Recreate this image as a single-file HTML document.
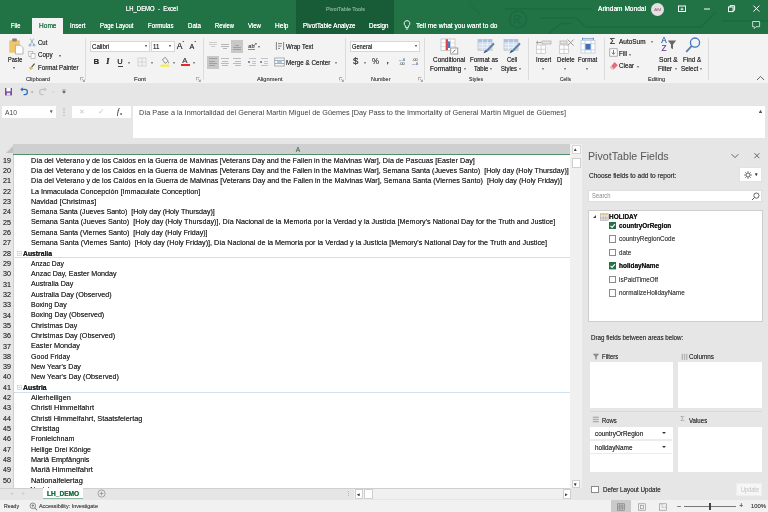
<!DOCTYPE html><html><head><meta charset="utf-8"><title>LH_DEMO - Excel</title><style>
html,body{margin:0;padding:0}body{width:768px;height:512px;position:relative;overflow:hidden;background:#e6e6e6;font-family:"Liberation Sans",sans-serif}
#a{position:absolute;left:0;top:0;width:768px;height:512px;overflow:hidden;will-change:transform;filter:blur(.35px)}
#a>div,#a>svg{position:absolute;display:block}
#a>span{position:absolute;white-space:pre;transform-origin:0 50%;display:block;text-shadow:0 0 .15px}
</style></head><body><div id="a">
<div style="left:0.00px;top:0.00px;width:768.00px;height:33.60px;background:#217346;"></div>
<div style="left:296.30px;top:0.00px;width:98.00px;height:33.60px;background:#185c37;"></div>
<svg style="left:380px;top:0;width:388px;height:34px" viewBox="380 0 388 34" fill="none" stroke="#1d6a40" stroke-width="1.5">
<path d="M505 8.7H592"/><path d="M541 17.8H576L586 27H701L716 12"/><path d="M548 34L561 23.5H572"/>
<circle cx="518" cy="19.3" r="8.4"/><path d="M514.5 23.5v-8h4l2 2-2 2h-3l5 4.5" stroke-width="1.3"/>
<path d="M722 21H768"/><path d="M470 0v5l10 9" stroke-opacity=".6"/>
</svg>
<span style='left:126.00px;top:5.31px;font-size:6.6px;line-height:8.58px;color:#fff;transform:scaleX(0.8986);'>LH_DEMO  -  Excel</span>
<span style='left:326.00px;top:5.59px;font-size:5.4px;line-height:7.02px;color:#7fae93;transform:scaleX(1.0036);'>PivotTable Tools</span>
<span style='left:598.00px;top:5.31px;font-size:6.6px;line-height:8.58px;color:#fff;transform:scaleX(0.9997);'>Arindam Mondal</span>
<div style="left:650.7px;top:2.6px;width:13.2px;height:13.2px;border-radius:7px;background:#e6e0e2"></div>
<span style='left:653.60px;top:6.54px;font-size:4.4px;line-height:5.72px;color:#a08a92;transform:scaleX(1.1223);'>AM</span>
<svg style="left:670px;top:0;width:98px;height:34px" viewBox="670 0 98 34" fill="none" stroke="#fff" stroke-width="1">
<rect x="678.5" y="6" width="7" height="5.5"/><path d="M680.5 9.2h3M682 7.7v2.6" stroke-width=".9"/>
<path d="M704 9h6"/>
<rect x="728.5" y="7" width="4.6" height="4.6"/><path d="M730 7v-1.3h4.6v4.6h-1.4"/>
<path d="M753.4 5.6l6 6M759.4 5.6l-6 6"/>
<path d="M752.6 21.5h7v5.2h-3.6l-1.7 1.8v-1.8h-1.7z" stroke="#d6e6dc" stroke-width=".9"/>
</svg>
<div style="left:32.00px;top:18.00px;width:31.30px;height:16.00px;background:#f3f3f3;"></div>
<span style='left:11.00px;top:22.01px;font-size:6.6px;line-height:8.58px;color:#fff;transform:scaleX(0.8941);'>File</span>
<span style='left:70.00px;top:22.01px;font-size:6.6px;line-height:8.58px;color:#fff;transform:scaleX(0.9394);'>Insert</span>
<span style='left:100.00px;top:22.01px;font-size:6.6px;line-height:8.58px;color:#fff;transform:scaleX(0.9046);'>Page Layout</span>
<span style='left:148.00px;top:22.01px;font-size:6.6px;line-height:8.58px;color:#fff;transform:scaleX(0.9278);'>Formulas</span>
<span style='left:187.50px;top:22.01px;font-size:6.6px;line-height:8.58px;color:#fff;transform:scaleX(0.9327);'>Data</span>
<span style='left:214.50px;top:22.01px;font-size:6.6px;line-height:8.58px;color:#fff;transform:scaleX(0.8786);'>Review</span>
<span style='left:247.50px;top:22.01px;font-size:6.6px;line-height:8.58px;color:#fff;transform:scaleX(0.9163);'>View</span>
<span style='left:274.50px;top:22.01px;font-size:6.6px;line-height:8.58px;color:#fff;transform:scaleX(0.9954);'>Help</span>
<span style='left:302.50px;top:22.01px;font-size:6.6px;line-height:8.58px;color:#fff;transform:scaleX(0.9483);'>PivotTable Analyze</span>
<span style='left:368.50px;top:22.01px;font-size:6.6px;line-height:8.58px;color:#fff;transform:scaleX(0.9498);'>Design</span>
<span style='left:39.00px;top:22.01px;font-size:6.6px;line-height:8.58px;color:#217346;transform:scaleX(0.9947);'>Home</span>
<span style='left:416.00px;top:22.01px;font-size:6.6px;line-height:8.58px;color:#fff;transform:scaleX(1.0015);'>Tell me what you want to do</span>
<svg style="left:402px;top:19px;width:10px;height:13px" viewBox="0 0 10 13" fill="none" stroke="#fff" stroke-width=".9">
<path d="M5 1.6a2.9 2.9 0 0 1 1.7 5.2l-.3 1.6h-2.8l-.3-1.6a2.9 2.9 0 0 1 1.7-5.2z"/><path d="M3.8 10h2.4" /></svg>
<div style="left:0.00px;top:33.60px;width:768.00px;height:49.70px;background:#f3f3f3;"></div>
<div style="left:0.00px;top:82.70px;width:768.00px;height:0.80px;background:#d8d8d8;"></div>
<div style="left:85.40px;top:37.50px;width:0.80px;height:42.50px;background:#dcdcdc;"></div>
<div style="left:202.60px;top:37.50px;width:0.80px;height:42.50px;background:#dcdcdc;"></div>
<div style="left:344.90px;top:37.50px;width:0.80px;height:42.50px;background:#dcdcdc;"></div>
<div style="left:424.30px;top:37.50px;width:0.80px;height:42.50px;background:#dcdcdc;"></div>
<div style="left:527.60px;top:37.50px;width:0.80px;height:42.50px;background:#dcdcdc;"></div>
<div style="left:603.60px;top:37.50px;width:0.80px;height:42.50px;background:#dcdcdc;"></div>
<div style="left:708.30px;top:37.50px;width:0.80px;height:42.50px;background:#dcdcdc;"></div>
<svg style="left:8px;top:36.8px;width:17px;height:18px" viewBox="0 0 17 18">
<rect x="1.2" y="3.2" width="10.6" height="12.6" rx=".8" fill="#f0c66c"/><rect x="4.2" y="1.6" width="4.6" height="2.8" rx=".6" fill="#8a8378"/>
<path d="M7.4 8.2h5.2l2.4 2.4v6.4h-7.6z" fill="#fff" stroke="#9a9a9a" stroke-width=".7"/></svg>
<span style='left:8.00px;top:56.31px;font-size:6.6px;line-height:8.58px;color:#3c3c3c;transform:scaleX(0.8474);'>Paste</span>
<span style='left:13.30px;top:64.66px;font-size:3.9px;line-height:5.07px;color:#777;'>▾</span>
<svg style="left:28px;top:37px;width:10px;height:36px" viewBox="0 0 10 36" fill="none">
<path d="M2.2 1.5l3.6 6M5.8 1.5l-3.6 6" stroke="#8797ad" stroke-width=".7"/><circle cx="2" cy="8.2" r="1" stroke="#6e8fc0" stroke-width=".7"/><circle cx="6" cy="8.2" r="1" stroke="#6e8fc0" stroke-width=".7"/>
<rect x=".8" y="14.6" width="4" height="5" stroke="#a8a8a8" stroke-width=".7" fill="#fff"/><rect x="3" y="16.6" width="4" height="5" stroke="#a8a8a8" stroke-width=".7" fill="#fff"/>
<path d="M6.6 26.6l-3 3.6" stroke="#555" stroke-width="1.3"/><path d="M1 30.2l2.6-.4 1.4 1.8-2.8 1.6z" fill="#e8b84a"/></svg>
<span style='left:38.00px;top:38.61px;font-size:6.6px;line-height:8.58px;color:#3c3c3c;transform:scaleX(0.9059);'>Cut</span>
<span style='left:38.00px;top:51.01px;font-size:6.6px;line-height:8.58px;color:#3c3c3c;transform:scaleX(0.9477);'>Copy</span>
<span style='left:58.50px;top:52.56px;font-size:3.9px;line-height:5.07px;color:#777;'>▾</span>
<span style='left:38.00px;top:63.81px;font-size:6.6px;line-height:8.58px;color:#3c3c3c;transform:scaleX(0.9287);'>Format Painter</span>
<span style='left:26.30px;top:75.89px;font-size:5.7px;line-height:7.41px;color:#555;transform:scaleX(0.9852);'>Clipboard</span>
<svg style="left:79.5px;top:77.0px;width:5px;height:5px" viewBox="0 0 5 5" fill="none" stroke="#888" stroke-width=".7"><path d="M.4 3.4V.4h3"/><path d="M2 2l2.4 2.4M4.4 2.6v1.8H2.6"/></svg>
<svg style="left:196.0px;top:77.0px;width:5px;height:5px" viewBox="0 0 5 5" fill="none" stroke="#888" stroke-width=".7"><path d="M.4 3.4V.4h3"/><path d="M2 2l2.4 2.4M4.4 2.6v1.8H2.6"/></svg>
<svg style="left:339.0px;top:77.0px;width:5px;height:5px" viewBox="0 0 5 5" fill="none" stroke="#888" stroke-width=".7"><path d="M.4 3.4V.4h3"/><path d="M2 2l2.4 2.4M4.4 2.6v1.8H2.6"/></svg>
<svg style="left:418.0px;top:77.0px;width:5px;height:5px" viewBox="0 0 5 5" fill="none" stroke="#888" stroke-width=".7"><path d="M.4 3.4V.4h3"/><path d="M2 2l2.4 2.4M4.4 2.6v1.8H2.6"/></svg>
<div style="left:90.30px;top:40.70px;width:60.20px;height:11.50px;background:#fff;border:0.7px solid #d6d6d6;box-sizing:border-box"></div>
<span style='left:92.30px;top:42.86px;font-size:6.6px;line-height:8.58px;color:#3c3c3c;transform:scaleX(0.9204);'>Calibri</span>
<span style='left:144.90px;top:44.18px;font-size:3.8px;line-height:4.94px;color:#666;'>▾</span>
<div style="left:151.00px;top:40.70px;width:23.50px;height:11.50px;background:#fff;border:0.7px solid #d6d6d6;box-sizing:border-box"></div>
<span style='left:153.00px;top:42.86px;font-size:6.6px;line-height:8.58px;color:#3c3c3c;transform:scaleX(0.9476);'>11</span>
<span style='left:168.90px;top:44.18px;font-size:3.8px;line-height:4.94px;color:#666;'>▾</span>
<span style='left:176.80px;top:40.61px;font-size:8.6px;line-height:11.18px;color:#444;'>A</span>
<span style='left:182.60px;top:39.65px;font-size:5px;line-height:6.5px;color:#444;'>ˆ</span>
<span style='left:189.50px;top:42.32px;font-size:7.2px;line-height:9.36px;color:#444;'>A</span>
<span style='left:194.60px;top:39.85px;font-size:5px;line-height:6.5px;color:#444;'>ˇ</span>
<span style='left:93.50px;top:57.13px;font-size:7.8px;line-height:10.14px;color:#333;font-weight:700;'>B</span>
<span style='left:106.30px;top:57.00px;font-size:8px;line-height:10.4px;color:#333;font-weight:700;font-style:italic;font-family:"Liberation Serif",serif;'>I</span>
<span style='left:117.30px;top:57.06px;font-size:7.6px;line-height:9.88px;color:#333;'>U</span>
<div style="left:117.50px;top:66.30px;width:5.50px;height:0.70px;background:#444;"></div>
<span style='left:128.30px;top:60.36px;font-size:3.9px;line-height:5.07px;color:#888;'>▾</span>
<span style='left:150.50px;top:60.36px;font-size:3.9px;line-height:5.07px;color:#888;'>▾</span>
<span style='left:173.00px;top:60.36px;font-size:3.9px;line-height:5.07px;color:#888;'>▾</span>
<span style='left:193.00px;top:60.36px;font-size:3.9px;line-height:5.07px;color:#888;'>▾</span>
<svg style="left:137px;top:57px;width:10px;height:10px" viewBox="0 0 10 10" fill="none" stroke="#c8c8c8" stroke-width=".7"><rect x="1" y="1" width="8" height="8"/><path d="M5 1v8M1 5h8"/></svg>
<svg style="left:159px;top:56px;width:12px;height:12px" viewBox="0 0 12 12" fill="none"><path d="M3.4 3.6l3-2.2 2.8 3.8-3 2.2z" stroke="#777" stroke-width=".8" fill="#f6f6f6"/><path d="M9.6 5.4q1 1.6 0 2-.9-.4 0-2z" fill="#777"/><rect x="1.6" y="8.6" width="8.6" height="2.2" fill="#f4ee42"/></svg>
<span style='left:182.20px;top:55.93px;font-size:7.8px;line-height:10.14px;color:#555;'>A</span>
<div style="left:180.50px;top:64.00px;width:9.00px;height:2.40px;background:#e8272a;"></div>
<span style='left:134.00px;top:75.89px;font-size:5.7px;line-height:7.41px;color:#555;transform:scaleX(1.0535);'>Font</span>
<div style="left:231.00px;top:40.00px;width:12.20px;height:12.50px;background:#c8c8c8;"></div>
<div style="left:207.00px;top:56.00px;width:12.20px;height:12.50px;background:#c8c8c8;"></div>
<div style="left:209.30px;top:42.00px;width:7.40px;height:0.80px;background:#cdcdcd;"></div>
<div style="left:209.30px;top:44.10px;width:7.40px;height:0.80px;background:#cdcdcd;"></div>
<div style="left:210.80px;top:46.20px;width:4.40px;height:0.80px;background:#cdcdcd;"></div>
<div style="left:221.30px;top:43.80px;width:7.40px;height:0.80px;background:#b4b4b4;"></div>
<div style="left:221.30px;top:45.90px;width:7.40px;height:0.80px;background:#b4b4b4;"></div>
<div style="left:222.80px;top:48.00px;width:4.40px;height:0.80px;background:#b4b4b4;"></div>
<div style="left:234.80px;top:45.20px;width:4.40px;height:0.80px;background:#a0a0a0;"></div>
<div style="left:233.30px;top:47.30px;width:7.40px;height:0.80px;background:#a0a0a0;"></div>
<div style="left:233.30px;top:49.40px;width:7.40px;height:0.80px;background:#a0a0a0;"></div>
<div style="left:209.30px;top:58.40px;width:7.40px;height:0.80px;background:#a0a0a0;"></div>
<div style="left:209.30px;top:60.50px;width:5.40px;height:0.80px;background:#a0a0a0;"></div>
<div style="left:209.30px;top:62.60px;width:7.40px;height:0.80px;background:#a0a0a0;"></div>
<div style="left:209.30px;top:64.70px;width:5.40px;height:0.80px;background:#a0a0a0;"></div>
<div style="left:221.30px;top:58.40px;width:7.40px;height:0.80px;background:#bababa;"></div>
<div style="left:222.30px;top:60.50px;width:5.40px;height:0.80px;background:#bababa;"></div>
<div style="left:221.30px;top:62.60px;width:7.40px;height:0.80px;background:#bababa;"></div>
<div style="left:222.30px;top:64.70px;width:5.40px;height:0.80px;background:#bababa;"></div>
<div style="left:233.30px;top:58.40px;width:7.40px;height:0.80px;background:#bababa;"></div>
<div style="left:235.30px;top:60.50px;width:5.40px;height:0.80px;background:#bababa;"></div>
<div style="left:233.30px;top:62.60px;width:7.40px;height:0.80px;background:#bababa;"></div>
<div style="left:235.30px;top:64.70px;width:5.40px;height:0.80px;background:#bababa;"></div>
<div style="left:249.00px;top:58.40px;width:7.40px;height:0.80px;background:#c4c4c4;"></div>
<div style="left:252.00px;top:60.50px;width:4.40px;height:0.80px;background:#c4c4c4;"></div>
<div style="left:252.00px;top:62.60px;width:4.40px;height:0.80px;background:#c4c4c4;"></div>
<div style="left:249.00px;top:64.70px;width:7.40px;height:0.80px;background:#c4c4c4;"></div>
<div style="left:261.00px;top:58.40px;width:7.40px;height:0.80px;background:#c4c4c4;"></div>
<div style="left:264.00px;top:60.50px;width:4.40px;height:0.80px;background:#c4c4c4;"></div>
<div style="left:264.00px;top:62.60px;width:4.40px;height:0.80px;background:#c4c4c4;"></div>
<div style="left:261.00px;top:64.70px;width:7.40px;height:0.80px;background:#c4c4c4;"></div>
<div style="left:247.8px;top:60.7px;width:2.3px;height:2.6px;border-radius:2px;background:#52739f"></div>
<div style="left:260px;top:60.7px;width:2.3px;height:2.6px;border-radius:2px;background:#52739f"></div>
<span style='left:248.30px;top:42.56px;font-size:5.6px;line-height:7.28px;color:#555;'>ab</span>
<div style="left:248.00px;top:49.00px;width:7.00px;height:0.70px;background:#888;"></div>
<span style='left:252.50px;top:40.85px;font-size:5px;line-height:6.5px;color:#777;'>↗</span>
<span style='left:258.00px;top:44.06px;font-size:3.9px;line-height:5.07px;color:#888;'>▾</span>
<svg style="left:275px;top:41px;width:10px;height:10px" viewBox="0 0 10 10" fill="none" stroke="#666" stroke-width=".8"><path d="M1.4 1v8M8.6 1v8M3 2.6h4M3 5h3.6M3 7.4h2"/></svg>
<svg style="left:274px;top:57px;width:11px;height:10px" viewBox="0 0 11 10" fill="none" stroke="#8a8a8a" stroke-width=".7"><rect x=".8" y="1" width="9.4" height="8" fill="#fff"/><path d="M.8 3.4h9.4M.8 6.6h9.4" stroke="#5b86c4"/><path d="M3 5h5" stroke="#555"/></svg>
<span style='left:286.00px;top:42.51px;font-size:6.6px;line-height:8.58px;color:#3c3c3c;transform:scaleX(0.9269);'>Wrap Text</span>
<span style='left:286.00px;top:58.71px;font-size:6.6px;line-height:8.58px;color:#3c3c3c;transform:scaleX(0.9517);'>Merge &amp; Center</span>
<span style='left:335.20px;top:60.36px;font-size:3.9px;line-height:5.07px;color:#888;'>▾</span>
<span style='left:257.00px;top:75.89px;font-size:5.7px;line-height:7.41px;color:#555;transform:scaleX(1.0080);'>Alignment</span>
<div style="left:350.30px;top:40.70px;width:70.20px;height:11.50px;background:#fff;border:0.7px solid #d6d6d6;box-sizing:border-box"></div>
<span style='left:352.30px;top:42.86px;font-size:6.6px;line-height:8.58px;color:#3c3c3c;transform:scaleX(0.8607);'>General</span>
<span style='left:414.90px;top:44.18px;font-size:3.8px;line-height:4.94px;color:#666;'>▾</span>
<span style='left:353.30px;top:56.48px;font-size:8.8px;line-height:11.44px;color:#444;transform:scaleX(1.1006);'>$</span>
<span style='left:363.50px;top:60.36px;font-size:3.9px;line-height:5.07px;color:#888;'>▾</span>
<span style='left:372.00px;top:56.87px;font-size:8.2px;line-height:10.66px;color:#555;transform:scaleX(0.9614);'>%</span>
<span style='left:386.60px;top:56.40px;font-size:8px;line-height:10.4px;color:#444;font-weight:700;'>,</span>
<span style='left:398.50px;top:58.46px;font-size:3.6px;line-height:4.68px;color:#4472a8;'>←.0</span>
<span style='left:399.50px;top:62.26px;font-size:3.6px;line-height:4.68px;color:#666;'>.00</span>
<span style='left:412.50px;top:58.46px;font-size:3.6px;line-height:4.68px;color:#666;'>.00</span>
<span style='left:411.50px;top:62.26px;font-size:3.6px;line-height:4.68px;color:#4472a8;'>→.0</span>
<span style='left:371.00px;top:75.89px;font-size:5.7px;line-height:7.41px;color:#555;transform:scaleX(0.9637);'>Number</span>
<svg style="left:440px;top:37.8px;width:19px;height:17px" viewBox="0 0 19 17" fill="none">
<rect x="1" y="1" width="14" height="11.6" fill="#fff" stroke="#b9b9b9" stroke-width=".7"/><path d="M1 4.8h14M1 8.6h14M5.6 1v11.6M10.4 1v11.6" stroke="#c9c9c9" stroke-width=".6"/>
<rect x="5.8" y="1.2" width="2.2" height="11" fill="#e0474c"/><rect x="8" y="3.4" width="2.2" height="6.6" fill="#4a7dc4"/>
<rect x="10.8" y="10" width="7" height="6" fill="#fff" stroke="#777" stroke-width=".7"/><path d="M12.6 14.6l3-3" stroke="#555" stroke-width=".9"/></svg>
<span style='left:433.00px;top:56.11px;font-size:6.6px;line-height:8.58px;color:#3c3c3c;transform:scaleX(0.9788);'>Conditional</span>
<span style='left:430.00px;top:64.81px;font-size:6.6px;line-height:8.58px;color:#3c3c3c;transform:scaleX(0.9932);'>Formatting</span>
<span style='left:463.50px;top:66.47px;font-size:3.9px;line-height:5.07px;color:#888;'>▾</span>
<svg style="left:476.5px;top:38px;width:19px;height:17px" viewBox="0 0 19 17" fill="none">
<rect x="1" y="1.6" width="14" height="10.6" fill="#d3dfee" stroke="#b9b9b9" stroke-width=".7"/><rect x="1" y="1.6" width="14" height="2.4" fill="#a9c1e2"/>
<path d="M1 6.6h14M1 9.4h14M5.6 1.6v10.6M10.4 1.6v10.6" stroke="#f4f7fb" stroke-width=".6"/>
<path d="M16.4 4.4l-7 7.4-3 3.4 4.2-1.8 7-7.2z" fill="#5d7fae"/><path d="M6.4 15.2l2-3.2 1.6 1.8z" fill="#39557f"/></svg>
<svg style="left:503px;top:38px;width:19px;height:17px" viewBox="0 0 19 17" fill="none">
<rect x="1" y="1.6" width="14" height="10.6" fill="#d3dfee" stroke="#b9b9b9" stroke-width=".7"/><rect x="1" y="1.6" width="14" height="2.4" fill="#a9c1e2"/>
<path d="M1 6.6h14M1 9.4h14M5.6 1.6v10.6M10.4 1.6v10.6" stroke="#f4f7fb" stroke-width=".6"/>
<path d="M16.4 4.4l-7 7.4-3 3.4 4.2-1.8 7-7.2z" fill="#5d7fae"/><path d="M6.4 15.2l2-3.2 1.6 1.8z" fill="#39557f"/></svg>
<span style='left:470.00px;top:56.11px;font-size:6.6px;line-height:8.58px;color:#3c3c3c;transform:scaleX(0.9432);'>Format as</span>
<span style='left:474.00px;top:64.81px;font-size:6.6px;line-height:8.58px;color:#3c3c3c;transform:scaleX(0.9070);'>Table</span>
<span style='left:490.30px;top:66.47px;font-size:3.9px;line-height:5.07px;color:#888;'>▾</span>
<span style='left:506.80px;top:56.11px;font-size:6.6px;line-height:8.58px;color:#3c3c3c;transform:scaleX(0.8979);'>Cell</span>
<span style='left:500.80px;top:64.81px;font-size:6.6px;line-height:8.58px;color:#3c3c3c;transform:scaleX(0.8793);'>Styles</span>
<span style='left:518.60px;top:66.47px;font-size:3.9px;line-height:5.07px;color:#888;'>▾</span>
<span style='left:469.00px;top:75.89px;font-size:5.7px;line-height:7.41px;color:#555;transform:scaleX(0.9032);'>Styles</span>
<svg style="left:535px;top:38px;width:17px;height:17px" viewBox="0 0 17 17" fill="none" stroke="#c0c0c0" stroke-width=".7">
<rect x="1.6" y="7" width="9" height="8.6" fill="#fff"/><path d="M1.6 11.3h9M6.1 7v8.6"/><rect x="7" y="3" width="9" height="3" fill="#e4e4e4" stroke="#aaa"/><path d="M6.4 4.5h-5M3 2.8L1.2 4.5 3 6.2" stroke="#999" stroke-width=".9"/></svg>
<svg style="left:558px;top:38px;width:17px;height:17px" viewBox="0 0 17 17" fill="none" stroke="#c0c0c0" stroke-width=".7">
<rect x="1.6" y="7" width="9" height="8.6" fill="#fff"/><path d="M1.6 11.3h9M6.1 7v8.6"/><rect x="2" y="3" width="7" height="3" fill="#e4e4e4" stroke="#aaa"/><path d="M9.6 1.6l6 6M15.6 1.6l-6 6" stroke="#999" stroke-width="1"/></svg>
<svg style="left:579px;top:37px;width:18px;height:18px" viewBox="0 0 18 18" fill="none" stroke="#b5c3d6" stroke-width=".7">
<rect x="2" y="3.6" width="14" height="12.4" fill="#fff"/><path d="M2 6.6h14M2 13h14M6 3.6v12.4M12 3.6v12.4"/><rect x="6.4" y="7" width="5.2" height="5.6" fill="#3f6fb6" stroke="none"/>
<path d="M3.6 1.8h10.8M3.6 .6v2.4M14.4 .6v2.4" stroke="#4a7dc4" stroke-width=".8"/></svg>
<span style='left:536.00px;top:56.11px;font-size:6.6px;line-height:8.58px;color:#3c3c3c;transform:scaleX(0.9273);'>Insert</span>
<span style='left:557.00px;top:56.11px;font-size:6.6px;line-height:8.58px;color:#3c3c3c;transform:scaleX(0.9233);'>Delete</span>
<span style='left:578.00px;top:56.11px;font-size:6.6px;line-height:8.58px;color:#3c3c3c;transform:scaleX(0.9239);'>Format</span>
<span style='left:541.50px;top:65.86px;font-size:3.9px;line-height:5.07px;color:#888;'>▾</span>
<span style='left:563.50px;top:65.86px;font-size:3.9px;line-height:5.07px;color:#888;'>▾</span>
<span style='left:585.50px;top:65.86px;font-size:3.9px;line-height:5.07px;color:#888;'>▾</span>
<span style='left:560.00px;top:75.89px;font-size:5.7px;line-height:7.41px;color:#555;transform:scaleX(0.8691);'>Cells</span>
<span style='left:609.70px;top:36.41px;font-size:8.6px;line-height:11.18px;color:#444;'>Σ</span>
<span style='left:619.00px;top:37.81px;font-size:6.6px;line-height:8.58px;color:#3c3c3c;transform:scaleX(0.9770);'>AutoSum</span>
<span style='left:650.50px;top:39.47px;font-size:3.9px;line-height:5.07px;color:#888;'>▾</span>
<svg style="left:609px;top:48.4px;width:9px;height:9px" viewBox="0 0 9 9" fill="none"><rect x=".8" y=".8" width="7.4" height="7.4" stroke="#8a8a8a" stroke-width=".7" fill="#fff"/><path d="M4.5 2v4.2M2.8 4.6l1.7 1.8 1.7-1.8" stroke="#3f6fb6" stroke-width=".9"/></svg>
<span style='left:619.00px;top:49.91px;font-size:6.6px;line-height:8.58px;color:#3c3c3c;transform:scaleX(0.9481);'>Fill</span>
<span style='left:629.00px;top:51.56px;font-size:3.9px;line-height:5.07px;color:#888;'>▾</span>
<svg style="left:608.5px;top:60.5px;width:10px;height:9px" viewBox="0 0 10 9"><path d="M5.6 1l3.2 3.2-4 4H2.6L1 6.6z" fill="#e56a7a"/><path d="M1 6.6l1.6 1.6h2.2L2.6 5z" fill="#f3c4ca"/></svg>
<span style='left:619.00px;top:62.11px;font-size:6.6px;line-height:8.58px;color:#3c3c3c;transform:scaleX(0.9514);'>Clear</span>
<span style='left:636.50px;top:63.77px;font-size:3.9px;line-height:5.07px;color:#888;'>▾</span>
<span style='left:661.20px;top:36.07px;font-size:8.2px;line-height:10.66px;color:#3f6fb6;'>A</span>
<span style='left:661.50px;top:43.67px;font-size:8.2px;line-height:10.66px;color:#7d4fa3;'>Z</span>
<svg style="left:667px;top:39px;width:10px;height:12px" viewBox="0 0 10 12"><path d="M.8 1.6h8.4l-3.2 4v4.6l-2 -1.2v-3.4z" fill="#666"/></svg>
<svg style="left:684px;top:36px;width:18px;height:18px" viewBox="0 0 18 18" fill="none"><circle cx="11" cy="6.6" r="4.6" stroke="#3f76c0" stroke-width="1.3"/><path d="M7.6 10.2l-5.4 5.6" stroke="#5a7da8" stroke-width="1.8"/></svg>
<span style='left:659.30px;top:55.91px;font-size:6.6px;line-height:8.58px;color:#3c3c3c;transform:scaleX(1.0203);'>Sort &amp;</span>
<span style='left:658.30px;top:64.61px;font-size:6.6px;line-height:8.58px;color:#3c3c3c;transform:scaleX(0.9689);'>Filter</span>
<span style='left:674.50px;top:66.27px;font-size:3.9px;line-height:5.07px;color:#888;'>▾</span>
<span style='left:683.00px;top:55.91px;font-size:6.6px;line-height:8.58px;color:#3c3c3c;transform:scaleX(0.9600);'>Find &amp;</span>
<span style='left:681.00px;top:64.61px;font-size:6.6px;line-height:8.58px;color:#3c3c3c;transform:scaleX(0.9439);'>Select</span>
<span style='left:699.80px;top:66.27px;font-size:3.9px;line-height:5.07px;color:#888;'>▾</span>
<span style='left:648.00px;top:75.89px;font-size:5.7px;line-height:7.41px;color:#555;transform:scaleX(0.9775);'>Editing</span>
<svg style="left:756px;top:75px;width:9px;height:6px" viewBox="0 0 9 6" fill="none" stroke="#555" stroke-width=".9"><path d="M1 5l3.5-3.6L8 5"/></svg>
<div style="left:0.00px;top:83.30px;width:768.00px;height:60.90px;background:#e6e6e6;"></div>
<svg style="left:3px;top:86px;width:70px;height:12px" viewBox="0 0 70 12" fill="none">
<rect x="2" y="2" width="7" height="7.4" fill="#7a4c9e"/><rect x="3.4" y="2" width="4.2" height="3.4" fill="#fff"/><rect x="3.8" y="6.8" width="3.4" height="2.6" fill="#e8dcef"/>
<path d="M18.6 3.4h3.2a2.6 2.6 0 0 1 0 5.2h-1.2" stroke="#2e6db8" stroke-width="1.2"/><path d="M19.8 1.2l-2.6 2.2 2.6 2.2z" fill="#2e6db8"/>
<path d="M42.4 3.4h-3.2a2.6 2.6 0 0 0 0 5.2h1.2" stroke="#c3c3c3" stroke-width="1.2"/><path d="M41.2 1.2l2.6 2.2-2.6 2.2z" fill="#c3c3c3"/>
<path d="M27.6 5.4h3l-1.5 1.7z" fill="#999"/><path d="M49 5.4h3l-1.5 1.7z" fill="#ccc"/>
<path d="M59.4 4h3.2M59.6 5.6h2.8l-1.4 1.7z" fill="#555" stroke="#555" stroke-width=".6"/></svg>
<div style="left:2.00px;top:106.30px;width:54.00px;height:11.90px;background:#fff;"></div>
<span style='left:5.00px;top:108.51px;font-size:6.6px;line-height:8.58px;color:#4a4a4a;text-shadow:none;transform:scaleX(1.0226);'>A10</span>
<span style='left:49.80px;top:109.47px;font-size:4.5px;line-height:5.85px;color:#666;'>▾</span>
<div style="left:62.60px;top:108.00px;width:0.70px;height:0.90px;background:#c6c6c6;"></div>
<div style="left:62.60px;top:110.20px;width:0.70px;height:0.90px;background:#c6c6c6;"></div>
<div style="left:62.60px;top:112.40px;width:0.70px;height:0.90px;background:#c6c6c6;"></div>
<div style="left:62.60px;top:114.60px;width:0.70px;height:0.90px;background:#c6c6c6;"></div>
<div style="left:64.20px;top:108.00px;width:0.70px;height:0.90px;background:#c6c6c6;"></div>
<div style="left:64.20px;top:110.20px;width:0.70px;height:0.90px;background:#c6c6c6;"></div>
<div style="left:64.20px;top:112.40px;width:0.70px;height:0.90px;background:#c6c6c6;"></div>
<div style="left:64.20px;top:114.60px;width:0.70px;height:0.90px;background:#c6c6c6;"></div>
<div style="left:72.30px;top:106.30px;width:58.50px;height:11.90px;background:#fff;"></div>
<span style='left:78.60px;top:107.78px;font-size:6.8px;line-height:8.84px;color:#c8c8c8;text-shadow:none;'>✕</span>
<span style='left:98.40px;top:107.26px;font-size:7.6px;line-height:9.88px;color:#c8c8c8;text-shadow:none;'>✓</span>
<span style='left:117.00px;top:107.46px;font-size:7.6px;line-height:9.88px;color:#555;font-style:italic;font-family:"Liberation Serif",serif;'>f</span>
<span style='left:120.00px;top:110.55px;font-size:5px;line-height:6.5px;color:#555;font-style:italic;font-family:"Liberation Serif",serif;'>x</span>
<div style="left:133.20px;top:106.30px;width:631.80px;height:31.40px;background:#fff;"></div>
<span style='left:138.50px;top:108.61px;font-size:6.9px;line-height:8.97px;color:#404040;text-shadow:none;transform:scaleX(1.0538);'>Día Pase a la Inmortalidad del General Martín Miguel de Güemes [Day Pass to the Immortality of General Martín Miguel de Güemes]</span>
<span style='left:758.60px;top:108.30px;font-size:6px;line-height:7.8px;color:#555;'>▴</span>
<div style="left:0.00px;top:144.20px;width:768.00px;height:355.80px;background:#e6e6e6;"></div>
<div style="left:13.40px;top:144.20px;width:556.80px;height:9.80px;background:#cfcfcf;"></div>
<div style="left:13.40px;top:153.60px;width:556.80px;height:0.90px;background:#4f8f6c;"></div>
<div style="left:5.6px;top:145.6px;width:0;height:0;border-left:7.2px solid transparent;border-bottom:7.2px solid #c2c2c2"></div>
<span style='left:295.80px;top:146.11px;font-size:6.6px;line-height:8.58px;color:#56826b;'>A</span>
<div style="left:13.60px;top:154.50px;width:556.60px;height:333.50px;background:#fff;"></div>
<div style="left:13.00px;top:154.50px;width:0.60px;height:333.50px;background:#d0d0d0;"></div>
<span style='left:3.30px;top:156.74px;font-size:6.8px;line-height:8.84px;color:#444;transform:scaleX(1.0446);'>19</span>
<span style='left:30.70px;top:156.57px;font-size:6.9px;line-height:8.97px;color:#383838;transform:scaleX(1.0396);'>Día del Veterano y de los Caídos en la Guerra de Malvinas [Veterans Day and the Fallen in the Malvinas War], Día de Pascuas [Easter Day]</span>
<span style='left:3.30px;top:167.06px;font-size:6.8px;line-height:8.84px;color:#444;transform:scaleX(1.0446);'>20</span>
<span style='left:30.70px;top:166.89px;font-size:6.9px;line-height:8.97px;color:#383838;transform:scaleX(1.0393);'>Día del Veterano y de los Caídos en la Guerra de Malvinas [Veterans Day and the Fallen in the Malvinas War], Semana Santa (Jueves Santo)  [Holy day (Holy Thursday)]</span>
<span style='left:3.30px;top:177.38px;font-size:6.8px;line-height:8.84px;color:#444;transform:scaleX(1.0446);'>21</span>
<span style='left:30.70px;top:177.21px;font-size:6.9px;line-height:8.97px;color:#383838;transform:scaleX(1.0424);'>Día del Veterano y de los Caídos en la Guerra de Malvinas [Veterans Day and the Fallen in the Malvinas War], Semana Santa (Viernes Santo)  [Holy day (Holy Friday)]</span>
<span style='left:3.30px;top:187.70px;font-size:6.8px;line-height:8.84px;color:#444;transform:scaleX(1.0446);'>22</span>
<span style='left:30.70px;top:187.53px;font-size:6.9px;line-height:8.97px;color:#383838;transform:scaleX(1.0467);'>La Inmaculada Concepción [Immaculate Conception]</span>
<span style='left:3.30px;top:198.02px;font-size:6.8px;line-height:8.84px;color:#444;transform:scaleX(1.0446);'>23</span>
<span style='left:30.70px;top:197.85px;font-size:6.9px;line-height:8.97px;color:#383838;transform:scaleX(1.0524);'>Navidad [Christmas]</span>
<span style='left:3.30px;top:208.34px;font-size:6.8px;line-height:8.84px;color:#444;transform:scaleX(1.0446);'>24</span>
<span style='left:30.70px;top:208.17px;font-size:6.9px;line-height:8.97px;color:#383838;transform:scaleX(1.0261);'>Semana Santa (Jueves Santo)  [Holy day (Holy Thursday)]</span>
<span style='left:3.30px;top:218.66px;font-size:6.8px;line-height:8.84px;color:#444;transform:scaleX(1.0446);'>25</span>
<span style='left:30.70px;top:218.49px;font-size:6.9px;line-height:8.97px;color:#383838;transform:scaleX(1.0465);'>Semana Santa (Jueves Santo)  [Holy day (Holy Thursday)], Día Nacional de la Memoria por la Verdad y la Justicia [Memory's National Day for the Truth and Justice]</span>
<span style='left:3.30px;top:228.98px;font-size:6.8px;line-height:8.84px;color:#444;transform:scaleX(1.0446);'>26</span>
<span style='left:30.70px;top:228.81px;font-size:6.9px;line-height:8.97px;color:#383838;transform:scaleX(1.0323);'>Semana Santa (Viernes Santo)  [Holy day (Holy Friday)]</span>
<span style='left:3.30px;top:239.30px;font-size:6.8px;line-height:8.84px;color:#444;transform:scaleX(1.0446);'>27</span>
<span style='left:30.70px;top:239.13px;font-size:6.9px;line-height:8.97px;color:#383838;transform:scaleX(1.0468);'>Semana Santa (Viernes Santo)  [Holy day (Holy Friday)], Día Nacional de la Memoria por la Verdad y la Justicia [Memory's National Day for the Truth and Justice]</span>
<span style='left:3.30px;top:249.62px;font-size:6.8px;line-height:8.84px;color:#444;transform:scaleX(1.0446);'>28</span>
<span style='left:22.50px;top:249.52px;font-size:6.8px;line-height:8.84px;color:#222;font-weight:700;transform:scaleX(0.9933);'>Australia</span>
<svg style="left:16.6px;top:250.94px;width:5px;height:5px" viewBox="0 0 5 5" fill="none" stroke="#c6c6c6" stroke-width=".6"><rect x=".6" y=".6" width="3.8" height="3.8" fill="#fff"/><path d="M1.4 2.5h2.2" stroke="#aaa"/></svg>
<div style="left:13.60px;top:257.45px;width:556.60px;height:0.80px;background:#d0e0f1;"></div>
<span style='left:3.30px;top:259.94px;font-size:6.8px;line-height:8.84px;color:#444;transform:scaleX(1.0446);'>29</span>
<span style='left:30.70px;top:259.78px;font-size:6.9px;line-height:8.97px;color:#383838;transform:scaleX(0.9902);'>Anzac Day</span>
<span style='left:3.30px;top:270.26px;font-size:6.8px;line-height:8.84px;color:#444;transform:scaleX(1.0446);'>30</span>
<span style='left:30.70px;top:270.10px;font-size:6.9px;line-height:8.97px;color:#383838;transform:scaleX(1.0303);'>Anzac Day, Easter Monday</span>
<span style='left:3.30px;top:280.58px;font-size:6.8px;line-height:8.84px;color:#444;transform:scaleX(1.0446);'>31</span>
<span style='left:30.70px;top:280.42px;font-size:6.9px;line-height:8.97px;color:#383838;transform:scaleX(1.0321);'>Australia Day</span>
<span style='left:3.30px;top:290.90px;font-size:6.8px;line-height:8.84px;color:#444;transform:scaleX(1.0446);'>32</span>
<span style='left:30.70px;top:290.74px;font-size:6.9px;line-height:8.97px;color:#383838;transform:scaleX(1.0432);'>Australia Day (Observed)</span>
<span style='left:3.30px;top:301.22px;font-size:6.8px;line-height:8.84px;color:#444;transform:scaleX(1.0446);'>33</span>
<span style='left:30.70px;top:301.06px;font-size:6.9px;line-height:8.97px;color:#383838;transform:scaleX(1.0128);'>Boxing Day</span>
<span style='left:3.30px;top:311.54px;font-size:6.8px;line-height:8.84px;color:#444;transform:scaleX(1.0446);'>34</span>
<span style='left:30.70px;top:311.38px;font-size:6.9px;line-height:8.97px;color:#383838;transform:scaleX(1.0220);'>Boxing Day (Observed)</span>
<span style='left:3.30px;top:321.86px;font-size:6.8px;line-height:8.84px;color:#444;transform:scaleX(1.0446);'>35</span>
<span style='left:30.70px;top:321.70px;font-size:6.9px;line-height:8.97px;color:#383838;transform:scaleX(1.0224);'>Christmas Day</span>
<span style='left:3.30px;top:332.18px;font-size:6.8px;line-height:8.84px;color:#444;transform:scaleX(1.0446);'>36</span>
<span style='left:30.70px;top:332.01px;font-size:6.9px;line-height:8.97px;color:#383838;transform:scaleX(1.0299);'>Christmas Day (Observed)</span>
<span style='left:3.30px;top:342.50px;font-size:6.8px;line-height:8.84px;color:#444;transform:scaleX(1.0446);'>37</span>
<span style='left:30.70px;top:342.34px;font-size:6.9px;line-height:8.97px;color:#383838;transform:scaleX(1.0530);'>Easter Monday</span>
<span style='left:3.30px;top:352.82px;font-size:6.8px;line-height:8.84px;color:#444;transform:scaleX(1.0446);'>38</span>
<span style='left:30.70px;top:352.66px;font-size:6.9px;line-height:8.97px;color:#383838;transform:scaleX(1.0284);'>Good Friday</span>
<span style='left:3.30px;top:363.14px;font-size:6.8px;line-height:8.84px;color:#444;transform:scaleX(1.0446);'>39</span>
<span style='left:30.70px;top:362.98px;font-size:6.9px;line-height:8.97px;color:#383838;transform:scaleX(1.0302);'>New Year's Day</span>
<span style='left:3.30px;top:373.46px;font-size:6.8px;line-height:8.84px;color:#444;transform:scaleX(1.0446);'>40</span>
<span style='left:30.70px;top:373.30px;font-size:6.9px;line-height:8.97px;color:#383838;transform:scaleX(1.0352);'>New Year's Day (Observed)</span>
<span style='left:3.30px;top:383.78px;font-size:6.8px;line-height:8.84px;color:#444;transform:scaleX(1.0446);'>41</span>
<span style='left:22.50px;top:383.68px;font-size:6.8px;line-height:8.84px;color:#222;font-weight:700;transform:scaleX(1.0076);'>Austria</span>
<svg style="left:16.6px;top:385.10px;width:5px;height:5px" viewBox="0 0 5 5" fill="none" stroke="#c6c6c6" stroke-width=".6"><rect x=".6" y=".6" width="3.8" height="3.8" fill="#fff"/><path d="M1.4 2.5h2.2" stroke="#aaa"/></svg>
<div style="left:13.60px;top:391.61px;width:556.60px;height:0.80px;background:#d0e0f1;"></div>
<span style='left:3.30px;top:394.10px;font-size:6.8px;line-height:8.84px;color:#444;transform:scaleX(1.0446);'>42</span>
<span style='left:30.70px;top:393.94px;font-size:6.9px;line-height:8.97px;color:#383838;transform:scaleX(1.0600);'>Allerheiligen</span>
<span style='left:3.30px;top:404.42px;font-size:6.8px;line-height:8.84px;color:#444;transform:scaleX(1.0446);'>43</span>
<span style='left:30.70px;top:404.25px;font-size:6.9px;line-height:8.97px;color:#383838;transform:scaleX(1.0755);'>Christi Himmelfahrt</span>
<span style='left:3.30px;top:414.74px;font-size:6.8px;line-height:8.84px;color:#444;transform:scaleX(1.0446);'>44</span>
<span style='left:30.70px;top:414.58px;font-size:6.9px;line-height:8.97px;color:#383838;transform:scaleX(1.0616);'>Christi Himmelfahrt, Staatsfeiertag</span>
<span style='left:3.30px;top:425.06px;font-size:6.8px;line-height:8.84px;color:#444;transform:scaleX(1.0446);'>45</span>
<span style='left:30.70px;top:424.89px;font-size:6.9px;line-height:8.97px;color:#383838;transform:scaleX(1.0334);'>Christtag</span>
<span style='left:3.30px;top:435.38px;font-size:6.8px;line-height:8.84px;color:#444;transform:scaleX(1.0446);'>46</span>
<span style='left:30.70px;top:435.22px;font-size:6.9px;line-height:8.97px;color:#383838;transform:scaleX(1.0419);'>Fronleichnam</span>
<span style='left:3.30px;top:445.70px;font-size:6.8px;line-height:8.84px;color:#444;transform:scaleX(1.0446);'>47</span>
<span style='left:30.70px;top:445.54px;font-size:6.9px;line-height:8.97px;color:#383838;transform:scaleX(1.0172);'>Heilige Drei Könige</span>
<span style='left:3.30px;top:456.02px;font-size:6.8px;line-height:8.84px;color:#444;transform:scaleX(1.0446);'>48</span>
<span style='left:30.70px;top:455.86px;font-size:6.9px;line-height:8.97px;color:#383838;transform:scaleX(1.0532);'>Mariä Empfängnis</span>
<span style='left:3.30px;top:466.34px;font-size:6.8px;line-height:8.84px;color:#444;transform:scaleX(1.0446);'>49</span>
<span style='left:30.70px;top:466.18px;font-size:6.9px;line-height:8.97px;color:#383838;transform:scaleX(1.0995);'>Mariä Himmelfahrt</span>
<span style='left:3.30px;top:476.66px;font-size:6.8px;line-height:8.84px;color:#444;transform:scaleX(1.0446);'>50</span>
<span style='left:30.70px;top:476.50px;font-size:6.9px;line-height:8.97px;color:#383838;transform:scaleX(1.0732);'>Nationalfeiertag</span>
<span style='left:3.20px;top:486.50px;font-size:6.7px;line-height:8.71px;color:#555;transform:scaleX(1.0868);'>51</span>
<span style='left:30.20px;top:486.43px;font-size:6.8px;line-height:8.84px;color:#333;'>Neujahr</span>
<div style="left:570.20px;top:144.20px;width:11.40px;height:343.80px;background:#f0f0f0;"></div>
<div style="left:571.50px;top:144.90px;width:9.10px;height:9.30px;background:#fff;border:0.6px solid #d6d6d6;box-sizing:border-box"></div>
<span style='left:574.00px;top:146.35px;font-size:5px;line-height:6.5px;color:#444;'>▴</span>
<div style="left:571.50px;top:158.40px;width:9.10px;height:9.40px;background:#fff;border:0.6px solid #cfcfcf;box-sizing:border-box"></div>
<div style="left:571.70px;top:479.60px;width:8.70px;height:8.00px;background:#fff;border:0.6px solid #cfcfcf;box-sizing:border-box"></div>
<span style='left:574.00px;top:480.65px;font-size:5px;line-height:6.5px;color:#444;'>▾</span>
<div style="left:0.00px;top:488.00px;width:581.60px;height:12.00px;background:#e6e6e6;"></div>
<div style="left:0.00px;top:488.00px;width:570.20px;height:0.60px;background:#cfcfcf;"></div>
<span style='left:9.50px;top:490.23px;font-size:5.5px;line-height:7.15px;color:#d2d2d2;'>◂</span>
<span style='left:21.50px;top:490.23px;font-size:5.5px;line-height:7.15px;color:#d2d2d2;'>▸</span>
<div style="left:42.60px;top:488.40px;width:40.70px;height:10.20px;background:#fff;"></div>
<div style="left:42.60px;top:498.00px;width:40.70px;height:0.80px;background:#8db8a0;"></div>
<span style='left:46.80px;top:489.51px;font-size:6.6px;line-height:8.58px;color:#217346;font-weight:700;transform:scaleX(0.9984);'>LH_DEMO</span>
<svg style="left:97px;top:489.3px;width:9px;height:9px" viewBox="0 0 9 9" fill="none" stroke="#8a8a8a" stroke-width=".7"><circle cx="4.5" cy="4.5" r="3.6"/><path d="M4.5 2.6v3.8M2.6 4.5h3.8"/></svg>
<div style="left:347.60px;top:490.60px;width:0.80px;height:1.00px;background:#b5b5b5;"></div>
<div style="left:347.60px;top:493.00px;width:0.80px;height:1.00px;background:#b5b5b5;"></div>
<div style="left:347.60px;top:495.40px;width:0.80px;height:1.00px;background:#b5b5b5;"></div>
<div style="left:354.30px;top:489.20px;width:217.10px;height:9.60px;background:#f0f0f0;"></div>
<div style="left:354.50px;top:489.20px;width:8.90px;height:9.60px;background:#fff;border:0.6px solid #cfcfcf;box-sizing:border-box"></div>
<span style='left:356.80px;top:490.95px;font-size:5px;line-height:6.5px;color:#444;'>◂</span>
<div style="left:363.80px;top:489.20px;width:9.10px;height:9.60px;background:#fff;border:0.6px solid #cfcfcf;box-sizing:border-box"></div>
<div style="left:562.60px;top:489.20px;width:8.70px;height:9.60px;background:#fff;border:0.6px solid #cfcfcf;box-sizing:border-box"></div>
<span style='left:565.40px;top:490.95px;font-size:5px;line-height:6.5px;color:#444;'>▸</span>
<div style="left:581.60px;top:144.20px;width:186.40px;height:355.80px;background:#e6e6e6;"></div>
<span style='left:588.00px;top:148.79px;font-size:11.4px;line-height:14.82px;color:#565656;text-shadow:none;transform:scaleX(0.9372);'>PivotTable Fields</span>
<svg style="left:730px;top:151px;width:32px;height:10px" viewBox="0 0 32 10" fill="none" stroke="#555" stroke-width=".9"><path d="M1.6 3.2l3.4 3.4 3.4-3.4"/><path d="M24.4 2.2l5 5M29.4 2.2l-5 5"/></svg>
<span style='left:589.00px;top:171.91px;font-size:6.6px;line-height:8.58px;color:#444;transform:scaleX(0.9882);'>Choose fields to add to report:</span>
<div style="left:739.00px;top:167.30px;width:23.40px;height:14.40px;background:#fff;border:0.6px solid #e2e2e2;box-sizing:border-box"></div>
<svg style="left:743px;top:170px;width:10px;height:10px" viewBox="0 0 10 10" fill="none" stroke="#555"><circle cx="5" cy="5" r="2" stroke-width=".9"/><path d="M5 1.2v1.4M5 7.4v1.4M1.2 5h1.4M7.4 5h1.4M2.3 2.3l1 1M6.7 6.7l1 1M2.3 7.7l1-1M6.7 3.3l1-1" stroke-width=".9"/></svg>
<span style='left:755.00px;top:171.88px;font-size:4.8px;line-height:6.24px;color:#444;'>▾</span>
<div style="left:588.00px;top:190.00px;width:174.40px;height:11.60px;background:#fff;border:0.6px solid #dedede;box-sizing:border-box"></div>
<span style='left:591.50px;top:191.64px;font-size:6.4px;line-height:8.32px;color:#8a8a8a;text-shadow:none;transform:scaleX(0.9136);'>Search</span>
<svg style="left:751px;top:191.5px;width:9px;height:9px" viewBox="0 0 9 9" fill="none" stroke="#555" stroke-width=".9"><circle cx="5.4" cy="3.6" r="2.6"/><path d="M3.6 5.4L1 8"/></svg>
<div style="left:587.60px;top:209.80px;width:175.00px;height:112.40px;background:#fff;border:0.9px solid #cdcdcd;box-sizing:border-box"></div>
<div style="left:592.6px;top:215.2px;width:0;height:0;border-left:3.3px solid transparent;border-bottom:3.3px solid #444"></div>
<svg style="left:599.5px;top:212.5px;width:9px;height:8px" viewBox="0 0 9 8" fill="none" stroke="#9a9a9a" stroke-width=".6"><rect x=".6" y=".8" width="7.6" height="6.4" fill="#fff"/><rect x=".6" y=".8" width="7.6" height="1.6" fill="#efc794" stroke="none"/><path d="M.6 4.2h7.6M.6 5.8h7.6M3.2 2.4v4.8M5.8 2.4v4.8"/></svg>
<span style='left:609.00px;top:213.08px;font-size:6.8px;line-height:8.84px;color:#222;font-weight:700;transform:scaleX(0.9510);'>HOLIDAY</span>
<svg style="left:609px;top:221.90px;width:7.4px;height:7.4px" viewBox="0 0 10 10"><rect width="10" height="10" fill="#217346"/><path d="M2 5.2l2.2 2.2L8 3" stroke="#fff" stroke-width="1.5" fill="none"/></svg>
<span style='left:619.30px;top:221.63px;font-size:6.8px;line-height:8.84px;color:#222;font-weight:700;transform:scaleX(0.9340);'>countryOrRegion</span>
<div style="left:609.00px;top:235.40px;width:7.40px;height:7.40px;background:#fff;border:0.8px solid #8a8a8a;box-sizing:border-box"></div>
<span style='left:619.30px;top:235.13px;font-size:6.8px;line-height:8.84px;color:#555;transform:scaleX(0.9354);'>countryRegionCode</span>
<div style="left:609.00px;top:248.90px;width:7.40px;height:7.40px;background:#fff;border:0.8px solid #8a8a8a;box-sizing:border-box"></div>
<span style='left:619.30px;top:248.63px;font-size:6.8px;line-height:8.84px;color:#555;transform:scaleX(0.9218);'>date</span>
<svg style="left:609px;top:262.40px;width:7.4px;height:7.4px" viewBox="0 0 10 10"><rect width="10" height="10" fill="#217346"/><path d="M2 5.2l2.2 2.2L8 3" stroke="#fff" stroke-width="1.5" fill="none"/></svg>
<span style='left:619.30px;top:262.13px;font-size:6.8px;line-height:8.84px;color:#222;font-weight:700;transform:scaleX(0.9501);'>holidayName</span>
<div style="left:609.00px;top:275.90px;width:7.40px;height:7.40px;background:#fff;border:0.8px solid #8a8a8a;box-sizing:border-box"></div>
<span style='left:619.30px;top:275.63px;font-size:6.8px;line-height:8.84px;color:#555;transform:scaleX(0.9217);'>isPaidTimeOff</span>
<div style="left:609.00px;top:289.40px;width:7.40px;height:7.40px;background:#fff;border:0.8px solid #8a8a8a;box-sizing:border-box"></div>
<span style='left:619.30px;top:289.13px;font-size:6.8px;line-height:8.84px;color:#555;transform:scaleX(0.9350);'>normalizeHolidayName</span>
<span style='left:590.70px;top:333.91px;font-size:6.6px;line-height:8.58px;color:#444;transform:scaleX(0.9467);'>Drag fields between areas below:</span>
<svg style="left:591.5px;top:352.5px;width:8px;height:8px" viewBox="0 0 8 8"><path d="M.8 .8h6.4l-2.5 3v3l-1.4-.8v-2.2z" fill="#8a8a8a"/></svg>
<span style='left:602.30px;top:352.51px;font-size:6.6px;line-height:8.58px;color:#444;transform:scaleX(0.9023);'>Filters</span>
<svg style="left:680.5px;top:352.5px;width:8px;height:8px" viewBox="0 0 8 8" fill="#b4b4b4"><rect x=".6" y=".8" width="1.4" height="6"/><rect x="2.8" y=".8" width="1.4" height="6"/><rect x="5" y=".8" width="1.4" height="6"/></svg>
<span style='left:689.30px;top:352.51px;font-size:6.6px;line-height:8.58px;color:#444;transform:scaleX(0.9604);'>Columns</span>
<div style="left:590.00px;top:362.00px;width:82.60px;height:46.00px;background:#fff;"></div>
<div style="left:677.70px;top:362.00px;width:84.70px;height:46.00px;background:#fff;"></div>
<div style="left:590.00px;top:411.00px;width:172.40px;height:0.70px;background:#d9d9d9;"></div>
<svg style="left:591.5px;top:416.2px;width:8px;height:8px" viewBox="0 0 8 8" fill="#b0b0b0"><rect x=".8" y=".6" width="6" height="1.4"/><rect x=".8" y="2.8" width="6" height="1.4"/><rect x=".8" y="5" width="6" height="1.4"/></svg>
<span style='left:602.30px;top:416.51px;font-size:6.6px;line-height:8.58px;color:#444;transform:scaleX(0.8909);'>Rows</span>
<span style='left:680.20px;top:414.26px;font-size:7.6px;line-height:9.88px;color:#9a9a9a;text-shadow:none;'>Σ</span>
<span style='left:689.30px;top:416.51px;font-size:6.6px;line-height:8.58px;color:#444;transform:scaleX(0.9252);'>Values</span>
<div style="left:590.00px;top:426.80px;width:82.60px;height:45.00px;background:#fff;"></div>
<div style="left:677.70px;top:426.80px;width:84.70px;height:45.00px;background:#fff;"></div>
<div style="left:590.00px;top:439.10px;width:82.40px;height:2.40px;background:#ececec;"></div>
<div style="left:590.00px;top:452.70px;width:82.40px;height:0.80px;background:#ececec;"></div>
<span style='left:595.00px;top:430.38px;font-size:6.8px;line-height:8.84px;color:#444;transform:scaleX(0.9379);'>countryOrRegion</span>
<div style="left:662px;top:432px;width:0;height:0;border-left:2.6px solid transparent;border-right:2.6px solid transparent;border-top:2.9px solid #333"></div>
<span style='left:595.00px;top:443.58px;font-size:6.8px;line-height:8.84px;color:#444;transform:scaleX(0.9453);'>holidayName</span>
<div style="left:662px;top:445.6px;width:0;height:0;border-left:2.6px solid transparent;border-right:2.6px solid transparent;border-top:2.9px solid #333"></div>
<div style="left:591.00px;top:485.60px;width:7.60px;height:7.60px;background:#fff;border:0.8px solid #8a8a8a;box-sizing:border-box"></div>
<span style='left:602.70px;top:485.91px;font-size:6.6px;line-height:8.58px;color:#444;transform:scaleX(0.9497);'>Defer Layout Update</span>
<div style="left:736.00px;top:483.00px;width:26.40px;height:13.00px;background:#f6f6f6;border:0.6px solid #eee;box-sizing:border-box"></div>
<span style='left:740.50px;top:485.91px;font-size:6.6px;line-height:8.58px;color:#d0d0d0;transform:scaleX(0.8464);'>Update</span>
<div style="left:0.00px;top:499.50px;width:768.00px;height:12.50px;background:#f1f1f1;"></div>
<span style='left:3.70px;top:503.23px;font-size:5.8px;line-height:7.54px;color:#555;transform:scaleX(0.8947);'>Ready</span>
<svg style="left:29px;top:501.6px;width:9px;height:9px" viewBox="0 0 9 9" fill="none" stroke="#666" stroke-width=".7"><circle cx="3.8" cy="3.8" r="2.8"/><path d="M3.8 2.4v3M2.4 3.4h2.8"/><path d="M5.8 6l2.2 2.2" stroke-width="1"/></svg>
<span style='left:38.60px;top:503.23px;font-size:5.8px;line-height:7.54px;color:#555;transform:scaleX(0.9375);'>Accessibility: Investigate</span>
<div style="left:610.60px;top:500.00px;width:20.80px;height:12.00px;background:#cacaca;"></div>
<svg style="left:616.5px;top:502.6px;width:8px;height:8px" viewBox="0 0 8 8" fill="none" stroke="#777" stroke-width=".6"><rect x=".6" y=".8" width="6.8" height="6.4"/><path d="M.6 3h6.8M.6 5h6.8M2.8 .8v6.4M5.2 .8v6.4"/></svg>
<svg style="left:638px;top:502.6px;width:8px;height:8px" viewBox="0 0 8 8" fill="none" stroke="#888" stroke-width=".6"><rect x=".6" y=".8" width="6.8" height="6.4"/><rect x="2.4" y="2.4" width="3.2" height="3.4"/></svg>
<svg style="left:659px;top:502.6px;width:8px;height:8px" viewBox="0 0 8 8" fill="none" stroke="#888" stroke-width=".6"><rect x=".6" y=".8" width="6.8" height="6.4"/><path d="M3 .8v3.4h4.4" stroke-dasharray="1 .6"/></svg>
<span style='left:677.30px;top:502.44px;font-size:6.4px;line-height:8.32px;color:#555;'>–</span>
<div style="left:684.40px;top:506.00px;width:51.60px;height:0.60px;background:#777;"></div>
<div style="left:709.20px;top:503.00px;width:1.80px;height:6.60px;background:#444;"></div>
<span style='left:739.20px;top:502.31px;font-size:6.6px;line-height:8.58px;color:#555;'>+</span>
<span style='left:751.00px;top:503.23px;font-size:5.8px;line-height:7.54px;color:#555;transform:scaleX(1.0116);'>100%</span>
</div></body></html>
